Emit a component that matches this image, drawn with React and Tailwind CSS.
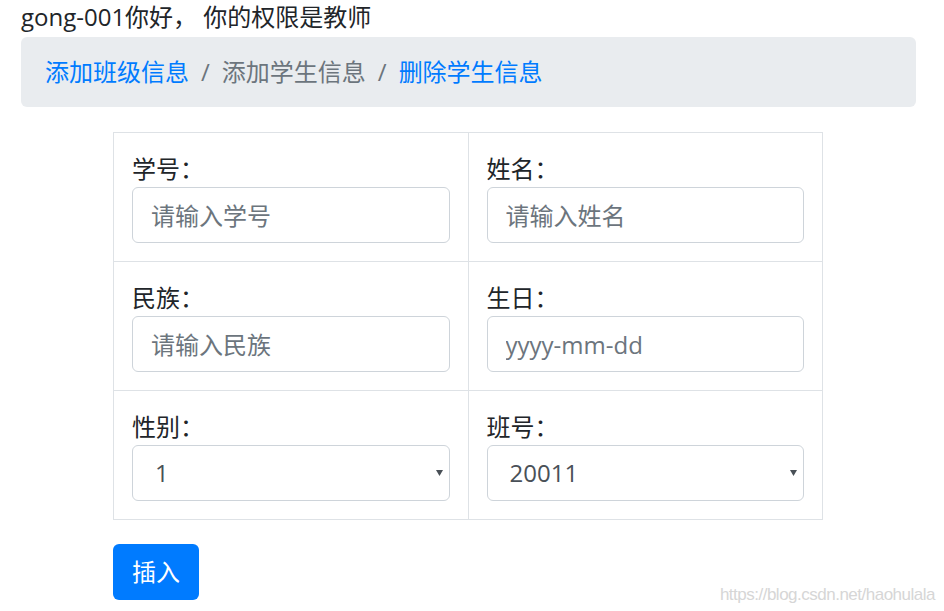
import React from "react";

const font = { fontFamily: '"Segoe UI", "Open Sans", "Noto Sans CJK SC", sans-serif' };

function Field({ label, children }) {
  return (
    <td className="border border-[#dee2e6] px-[18px] pt-[18px] pb-[18px] align-top">
      <div className="h-[36px] leading-[36px] text-[#212529]">{label}</div>
      {children}
    </td>
  );
}

function Input({ placeholder }) {
  return (
    <input
      placeholder={placeholder}
      className="block w-full h-[56px] border border-[#ced4da] rounded-[6px] px-[18px] text-[24px] text-[#495057] placeholder:text-[#6c757d] bg-white outline-none"
    />
  );
}

function Select({ value }) {
  return (
    <div className="relative h-[56px] border border-[#ced4da] rounded-[6px] bg-white">
      <div className="h-full flex items-center pl-[22px] text-[#495057] text-[24px]">{value}</div>
      <svg className="absolute right-[6px] top-[24px]" width="7" height="6" viewBox="0 0 7 6">
        <path d="M0 0 L7 0 L3.5 6 Z" fill="#495057" />
      </svg>
    </div>
  );
}

export default function App() {
  return (
    <div className="w-[944px] h-[611px] bg-white relative overflow-hidden text-[24px]" style={font}>
      <div className="pl-[21px] w-[916px]">
        <div className="h-[37px] leading-[37px] text-[#212529] -mt-[2px]">gong-001你好， 你的权限是教师</div>
        <div className="mt-[2px] h-[70px] bg-[#e9ecef] rounded-[6px] px-[24px] flex items-center">
          <span className="text-[#007bff]">添加班级信息</span>
          <span className="text-[#6c757d] px-[12px]">/</span>
          <span className="text-[#6c757d]">添加学生信息</span>
          <span className="text-[#6c757d] px-[12px]">/</span>
          <span className="text-[#007bff]">删除学生信息</span>
        </div>
        <div className="w-[710px] ml-[92px] mt-[25px]">
          <table className="w-[710px] border-collapse table-fixed">
            <tbody>
              <tr>
                <Field label="学号："><Input placeholder="请输入学号" /></Field>
                <Field label="姓名："><Input placeholder="请输入姓名" /></Field>
              </tr>
              <tr>
                <Field label="民族："><Input placeholder="请输入民族" /></Field>
                <Field label="生日："><Input placeholder="yyyy-mm-dd" /></Field>
              </tr>
              <tr>
                <Field label="性别："><Select value="1" /></Field>
                <Field label="班号："><Select value="20011" /></Field>
              </tr>
            </tbody>
          </table>
          <button className="mt-[24px] h-[56px] w-[86px] bg-[#007bff] text-white rounded-[6px] text-[24px]">插入</button>
        </div>
      </div>
      <div
        className="absolute right-[9px] top-[582px] text-[17px] text-[#d6d6d6] tracking-[-0.5px]"
        style={{ fontFamily: '"Liberation Sans Narrow", "Liberation Sans", sans-serif' }}
      >
        https://blog.csdn.net/haohulala
      </div>
    </div>
  );
}
